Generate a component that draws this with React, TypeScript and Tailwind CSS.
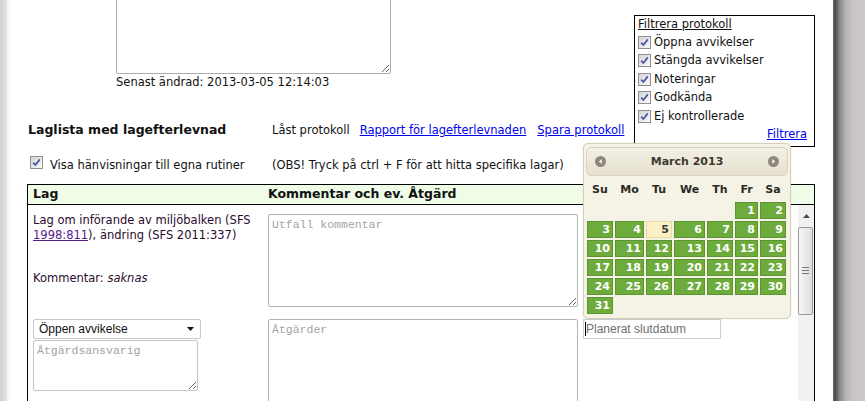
const days = Array.from({ length: 31 }, (_, i) => i + 1)
const dayNames = ['Su', 'Mo', 'Tu', 'We', 'Th', 'Fr', 'Sa']
const filters = ['Öppna avvikelser', 'Stängda avvikelser', 'Noteringar', 'Godkända', 'Ej kontrollerade']
const calCols = 'grid grid-cols-[26px_29px_26px_31px_26px_23px_26px] gap-x-[2px]'

function Check({ className = '' }: { className?: string }) {
  return (
    <span
      className={`inline-flex h-[13px] w-[13px] shrink-0 items-center justify-center border border-[#8f8f8f] bg-[linear-gradient(135deg,#d4d4d4,#fbfbfb)] ${className}`}
    >
      <svg width="9" height="9" viewBox="0 0 9 9">
        <path d="M1.2 4.6 L3.4 7 L7.8 1.4" stroke="#4a55a6" strokeWidth="1.7" fill="none" />
      </svg>
    </span>
  )
}

function NavIcon({ dir }: { dir: 'prev' | 'next' }) {
  return (
    <svg width="11" height="11" viewBox="0 0 11 11">
      <circle cx="5.5" cy="5.5" r="5.5" fill="#8d877d" />
      {dir === 'prev' ? <path d="M6.8 3 L3.8 5.5 L6.8 8 Z" fill="#f3f1e8" /> : <path d="M4.2 3 L7.2 5.5 L4.2 8 Z" fill="#f3f1e8" />}
    </svg>
  )
}

function Calendar() {
  return (
    <div className="absolute left-[576px] top-[143px] z-10 h-[176px] w-[208px] rounded-[5px] border border-[#d6cfb3] bg-[#f5f3e5] shadow-[0_0_2px_rgba(0,0,0,0.08)]">
      <div className="mx-[2px] mt-[3px] flex h-[29px] items-center justify-between rounded-[5px] border border-[#d9d3bd] bg-[linear-gradient(#f3f0e4,#e5e0cf)] pl-[8px] pr-[8px]">
        <NavIcon dir="prev" />
        <span className="pt-[2px] text-[11px] font-bold text-[#40392f]">March 2013</span>
        <NavIcon dir="next" />
      </div>
      <div className={`${calCols} ml-[3px] mt-[6px] h-[16px] text-[11px] font-bold leading-4 text-[#2c2a26]`}>
        {dayNames.map((d) => (
          <span key={d} className="text-center">
            {d}
          </span>
        ))}
      </div>
      <div className={`${calCols} ml-[3px] mt-[4px] gap-y-[2px] text-[11px] font-bold`}>
        {[0, 1, 2, 3, 4].map((i) => (
          <span key={'b' + i} />
        ))}
        {days.map((d) =>
          d === 5 ? (
            <span
              key={d}
              className="h-[17px] border border-[#e8d89e] bg-[#fbefc6] pr-[2px] text-right leading-[16px] text-[#363636]"
            >
              {d}
            </span>
          ) : (
            <span
              key={d}
              className="h-[17px] border border-[#5b9430] bg-[#6cab3c] pr-[2px] text-right leading-[16px] text-white"
            >
              {d}
            </span>
          ),
        )}
      </div>
    </div>
  )
}

function Scrollbar() {
  return (
    <div className="flex w-[16px] shrink-0 flex-col items-center bg-[#f1f1f1] pt-[3px]">
      <div className="flex h-[16px] w-full items-center justify-center">
        <svg width="7" height="4" viewBox="0 0 7 4">
          <path d="M0 4 L3.5 0 L7 4 Z" fill="#4d4d4d" />
        </svg>
      </div>
      <div className="mt-[3px] flex h-[88px] w-[15px] flex-col items-center justify-center gap-[2px] self-start rounded-[2px] border border-[#9a9a9a] bg-[linear-gradient(to_right,#f6f6f6,#dedede)]">
        <span className="h-px w-[7px] bg-[#777]" />
        <span className="h-px w-[7px] bg-[#777]" />
        <span className="h-px w-[7px] bg-[#777]" />
      </div>
    </div>
  )
}

export default function App() {
  const mono = "font-['Liberation_Mono',monospace] text-[11.5px] placeholder:text-[#a3a3a3]"

  return (
    <div className="flex h-[401px] w-[865px] overflow-hidden bg-white font-['DejaVu_Sans',sans-serif] text-[11.5px] text-[#111]">
      <div className="w-[7px] shrink-0 bg-[linear-gradient(to_right,#d2d2d2,#e4e4e4)]" />
      <main className="relative flex w-[826px] shrink-0 flex-col bg-[linear-gradient(to_right,#f4f4f4,#ffffff_5px)]">
        <div className="flex items-start">
          <div className="flex flex-1 flex-col">
            <textarea className="-mt-[10px] ml-[109px] h-[84px] w-[275px] rounded-[2px] border border-[#acacac] bg-white" />
            <div className="ml-[109px] leading-4">Senast ändrad: 2013-03-05 12:14:03</div>
            <div className="mt-[32px] flex items-center leading-4">
              <h2 className="ml-[21px] w-[244px] text-[12.5px] font-bold">Laglista med lagefterlevnad</h2>
              <span>Låst protokoll</span>
              <a className="ml-[10px] text-[#0000ee] underline">Rapport för lagefterlevnaden</a>
              <a className="ml-[11px] text-[#0000ee] underline">Spara protokoll</a>
            </div>
          </div>
          <div className="mr-[18px] mt-[15px] flex h-[132px] w-[181px] flex-col border border-black pl-[3px] pr-[7px]">
            <span className="leading-4 underline">Filtrera protokoll</span>
            <div className="mt-px flex flex-col">
              {filters.map((f) => (
                <label key={f} className="flex h-[18.5px] items-center gap-[3px]">
                  <Check />
                  {f}
                </label>
              ))}
            </div>
            <a className="self-end leading-4 text-[#0000ee] underline">Filtrera</a>
          </div>
        </div>

        <div className="mt-[9px] flex items-start">
          <Check className="ml-[23px]" />
          <span className="ml-[7px] mt-px w-[222px] leading-4">Visa hänvisningar till egna rutiner</span>
          <span className="mt-px leading-4">(OBS! Tryck på ctrl + F för att hitta specifika lagar)</span>
        </div>

        <div className="ml-[20px] mt-[11px] flex h-[240px] w-[788px] shrink-0 flex-col border border-black">
          <div className="flex h-[22px] items-center border-b border-black bg-[#effce8] text-[12.5px] font-bold">
            <span className="w-[240px] pl-[5px]">Lag</span>
            <span>Kommentar och ev. Åtgärd</span>
          </div>
          <div className="flex flex-1">
            <div className="flex w-[770px] flex-col">
              <div className="flex h-[114px]">
                <div className="w-[240px] pl-[5px] pt-[8px] leading-[15px] text-[#2a0a2e]">
                  <p>
                    Lag om införande av miljöbalken (SFS{' '}
                    <a className="text-[#551a8b] underline">1998:811</a>), ändring (SFS 2011:337)
                  </p>
                  <p className="mt-[28px]">
                    Kommentar: <em>saknas</em>
                  </p>
                </div>
                <div className="w-[315px] pt-[9px]">
                  <textarea
                    placeholder="Utfall kommentar"
                    className={`h-[93px] w-[310px] rounded-[2px] border border-[#b4b4b4] px-[3px] py-[1px] ${mono}`}
                  />
                </div>
              </div>
              <div className="flex">
                <div className="flex w-[240px] flex-col pl-[5px]">
                  <div className="flex h-[20px] w-[168px] items-center justify-between rounded-[2px] border border-[#c9c9c9] pl-[5px] pr-[6px] font-['Liberation_Sans',sans-serif] text-[12px]">
                    <span>Öppen avvikelse</span>
                    <svg width="7" height="4" viewBox="0 0 7 4">
                      <path d="M0 0 L7 0 L3.5 4 Z" fill="#111" />
                    </svg>
                  </div>
                  <textarea
                    placeholder="Åtgärdsansvarig"
                    className={`mt-px h-[51px] w-[165px] rounded-[2px] border border-[#c4c4c4] px-[3px] py-[1px] ${mono}`}
                  />
                </div>
                <div className="w-[315px]">
                  <textarea
                    placeholder="Åtgärder"
                    className={`h-[100px] w-[310px] rounded-[2px] border border-[#b4b4b4] px-[3px] py-[1px] ${mono}`}
                  />
                </div>
                <div className="relative h-[20px] w-[138px]">
                  <input
                    placeholder="Planerat slutdatum"
                    className="h-[20px] w-[138px] border border-[#c8d0d8] pl-[2px] font-['Liberation_Sans',sans-serif] text-[12px] placeholder:text-[#6f6f6f]"
                  />
                  <span className="absolute left-[2px] top-[3px] h-[14px] w-px bg-black" />
                </div>
              </div>
            </div>
            <Scrollbar />
          </div>
        </div>
        <Calendar />
      </main>
      <div className="w-[32px] shrink-0 bg-[linear-gradient(to_right,#6a6a6a,#4a4a4a_2px,#8a8a8a_7px,#b8b5b5_13px,#c9c5c5_20px,#ccc8c8)]" />
    </div>
  )
}
